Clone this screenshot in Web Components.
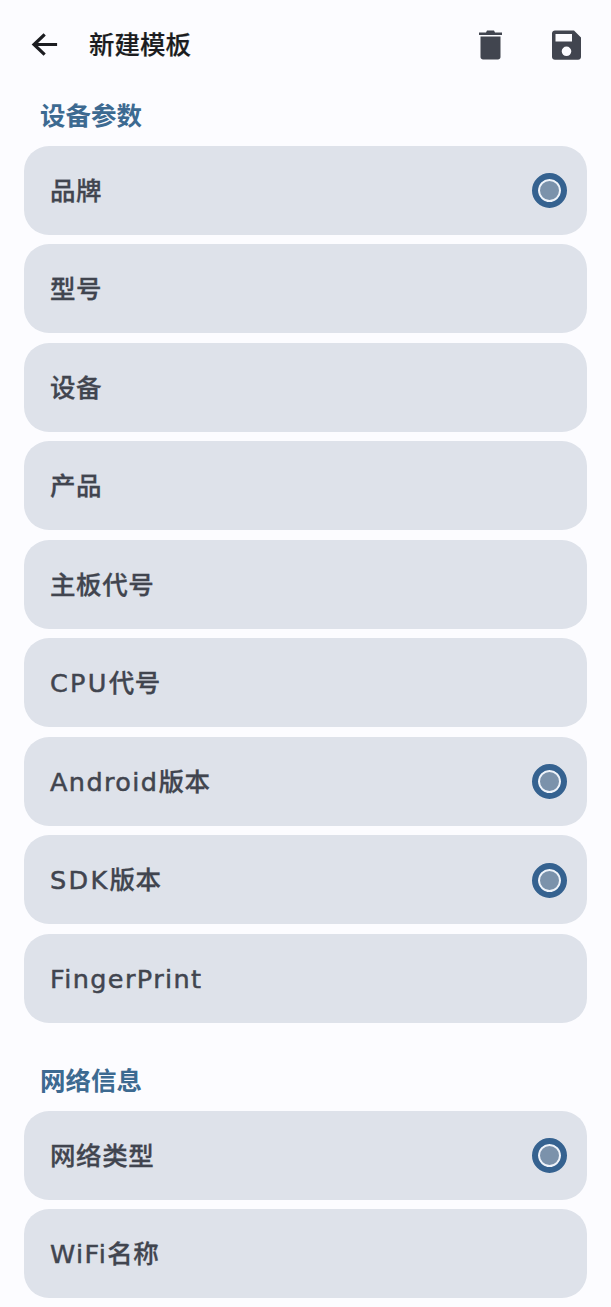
<!doctype html>
<html lang="zh">
<head>
<meta charset="utf-8">
<title>新建模板</title>
<style>
  html, body { margin: 0; background: #fcfcff; }
  body { font-family: "DejaVu Sans", "Noto Sans CJK SC", sans-serif; height: 1307px; overflow: hidden; }
  /* latin part of a row label is set wider than the cjk part */
  x-row i { font-style: normal; letter-spacing: 1.4px; -webkit-text-stroke: 0.5px #41454f; }
  x-row i.caps { letter-spacing: 2.3px; }
</style>
</head>
<body>
<x-page>
  <x-appbar title="新建模板"></x-appbar>
  <x-section title="设备参数">
    <x-row checked>品牌</x-row>
    <x-row>型号</x-row>
    <x-row>设备</x-row>
    <x-row>产品</x-row>
    <x-row>主板代号</x-row>
    <x-row><i class="caps">CPU</i>代号</x-row>
    <x-row checked><i>Android</i>版本</x-row>
    <x-row checked><i class="caps">SDK</i>版本</x-row>
    <x-row><i>FingerPrint</i></x-row>
  </x-section>
  <x-section title="网络信息">
    <x-row checked>网络类型</x-row>
    <x-row><i>WiFi</i>名称</x-row>
  </x-section>
</x-page>

<script>
// page wrapper
class XPage extends HTMLElement {
  constructor() {
    super();
    let shadow = this.attachShadow({mode: 'open'});
    shadow.innerHTML = `
    <style>
      :host { display: flex; flex-direction: column; gap: 32px; padding: 0 24px; }
      ::slotted(x-appbar) { margin: 0 -24px -32px -24px; }
    </style>
    <slot></slot>`;
  }
}

// top bar with back arrow, title, delete and save
class XAppbar extends HTMLElement {
  constructor() {
    super();
    let shadow = this.attachShadow({mode: 'open'});
    shadow.innerHTML = `
    <style>
      :host { display: flex; align-items: center; height: 89.75px; padding: 0 30px 0 29px; color: #1b1c20; }
      svg { display: block; }
      .title { flex: 1; margin-left: 28px; font-size: 25.5px; font-weight: 500; line-height: 30px; -webkit-text-stroke: 0.2px #1b1c20; }
      .del { margin-right: 50px; }
    </style>
    <svg width="32" height="32" viewBox="0 0 32 32" fill="none" stroke="#1b1c20" stroke-width="3.2" stroke-linecap="square">
      <path d="M26.500 15.500H6M14.500 6.500L5 15.500L14.500 24.500"/>
    </svg>
    <span class="title"></span>
    <svg class="del" width="23" height="30" viewBox="0 0 23 30" fill="#41454f">
      <path d="M0 2.500H7L8 .5H15L16 2.500H23V5H0Z"/>
      <path d="M1.500 6.500H21.500V27C21.500 28.600 20.300 29.500 19 29.500H4C2.700 29.500 1.500 28.600 1.500 27Z"/>
    </svg>
    <svg width="29" height="30" viewBox="0 0 29 30" fill="#41454f">
      <path fill-rule="evenodd" d="M3 .5H22L29 7.500V27C29 28.600 27.700 29.800 26 29.800H3C1.300 29.800 0 28.600 0 27V3.300C0 1.700 1.300 .5 3 .5ZM3.500 4V11.500H20V4ZM14.500 16.500A4.800 4.800 0 1 0 14.500 26.100A4.800 4.800 0 1 0 14.500 16.500Z"/>
    </svg>`;
    shadow.querySelector('.title').textContent = this.getAttribute('title') || '';
  }
}

// titled group of rows
class XSection extends HTMLElement {
  constructor() {
    super();
    let shadow = this.attachShadow({mode: 'open'});
    shadow.innerHTML = `
    <style>
      :host { display: block; }
      h2 { margin: 0; padding-left: 16px; height: 56px; line-height: 52px; font-size: 25.5px; font-weight: 700; color: #3d6a91; }
      .rows { display: flex; flex-direction: column; gap: 9.5px; }
    </style>
    <h2></h2>
    <div class="rows"><slot></slot></div>`;
    shadow.querySelector('h2').textContent = this.getAttribute('title') || '';
  }
}

// one row, with a radio mark when checked
class XRow extends HTMLElement {
  constructor() {
    super();
    let shadow = this.attachShadow({mode: 'open'});
    shadow.innerHTML = `
    <style>
      :host { display: flex; align-items: center; justify-content: space-between; height: 89px; box-sizing: border-box; padding: 1px 20px 0 26px; background: #dee2ea; border-radius: 25px; color: #41454f; font-size: 25.5px; font-weight: 500; letter-spacing: 0.6px; -webkit-text-stroke: 0.3px #41454f; }
      .label { line-height: 30px; }
      .mark { display: none; width: 35px; height: 35px; box-sizing: border-box; border-radius: 50%; border: 6px solid #356290; background: #7b92ab; box-shadow: inset 0 0 0 2px #eef3fa; }
      :host([checked]) .mark { display: block; }
    </style>
    <span class="label"><slot></slot></span>
    <span class="mark"></span>`;
  }
}

customElements.define('x-page', XPage);
customElements.define('x-appbar', XAppbar);
customElements.define('x-section', XSection);
customElements.define('x-row', XRow);
</script>
</body>
</html>
